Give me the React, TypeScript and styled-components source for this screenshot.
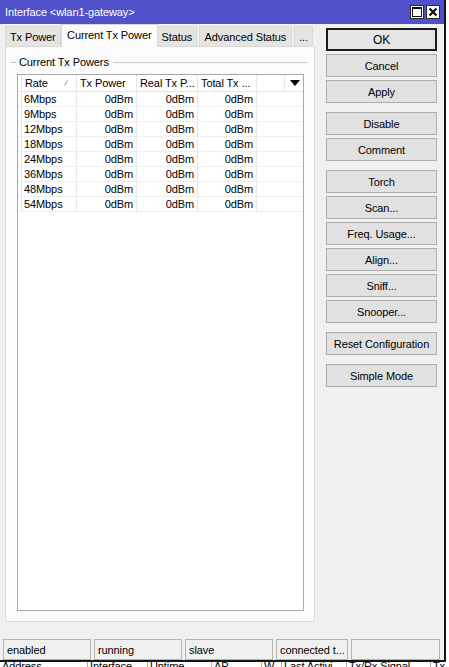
import React from 'react';
import styled, { createGlobalStyle, css } from 'styled-components';

const GlobalStyle = createGlobalStyle`
  html, body {
    margin: 0;
    padding: 0;
    background: #ffffff;
  }
  body {
    font-family: 'Liberation Sans', Arial, sans-serif;
    font-size: 11px;
    letter-spacing: -0.1px;
    color: #000;
  }
`;

const Page = styled.div`
  width: 449px;
  height: 667px;
  overflow: hidden;
  background: #ffffff;
`;

const Window = styled.div`
  width: 444px;
  height: 660px;
  display: flex;
  flex-direction: column;
  background: #f0f0f0;
  border-right: 2px solid #151515;
  border-bottom: 2px solid #151515;
`;

const TitleBar = styled.div`
  height: 24px;
  flex: none;
  display: flex;
  align-items: center;
  padding: 0 4px 0 5px;
  background: #5151cc;
  color: #ffffff;
`;

const Title = styled.span`
  flex: 1;
`;

const TitleButton = styled.div`
  width: 14px;
  height: 14px;
  margin-left: 2px;
  box-sizing: border-box;
  border: 1px solid #2a2a2a;
  background: #ffffff;
  display: flex;
  align-items: center;
  justify-content: center;
`;

const Main = styled.div`
  flex: 1;
  display: flex;
  gap: 11px;
  padding: 0 0 0 5px;
  min-height: 0;
`;

const LeftColumn = styled.div`
  width: 310px;
  display: flex;
  flex-direction: column;
`;

const TabStrip = styled.div`
  height: 22px;
  display: flex;
  align-items: flex-end;
  position: relative;
  z-index: 1;
`;

const Tab = styled.div<{ $w: number; $active?: boolean }>`
  width: ${({ $w }) => $w}px;
  box-sizing: border-box;
  height: 20px;
  margin-right: 2px;
  display: flex;
  align-items: center;
  justify-content: center;
  background: #e4e4e4;
  border: 1px solid #d9d9d9;
  border-bottom: none;
  white-space: nowrap;
  ${({ $active }) =>
    $active &&
    css`
      height: 23px;
      margin: 0 -1px -1px -2px;
      background: #fbfbfb;
      padding-bottom: 3px;
    `}
`;

const Panel = styled.div`
  flex: 1;
  display: flex;
  flex-direction: column;
  background: #fbfbfb;
  border: 1px solid #d9d9d9;
  padding: 8px 6px 10px 5px;
  min-height: 0;
`;

const GroupTitle = styled.div`
  display: flex;
  align-items: center;
  height: 14px;
  &::before {
    content: '';
    width: 6px;
    height: 1px;
    background: #c8c8c8;
    margin-right: 2px;
  }
  &::after {
    content: '';
    flex: 1;
    height: 1px;
    background: #c8c8c8;
    margin-left: 4px;
  }
`;

const GroupBody = styled.div`
  flex: 1;
  display: flex;
  padding: 5px 4px 0 6px;
  min-height: 0;
`;

const List = styled.div`
  flex: 1;
  background: #ffffff;
  border: 1px solid #a8a8a8;
  display: flex;
  flex-direction: column;
`;

const Row = styled.div<{ $header?: boolean }>`
  display: flex;
  height: ${({ $header }) => ($header ? 16 : 14)}px;
  border-bottom: 1px solid ${({ $header }) => ($header ? '#e5e5e5' : '#efefef')};
`;

const Cell = styled.div<{ $w?: number; $right?: boolean; $header?: boolean }>`
  ${({ $w }) =>
    $w !== undefined
      ? css`
          width: ${$w}px;
          flex: none;
          border-right: 1px solid #e8e8e8;
        `
      : css`
          flex: 1;
        `}
  display: flex;
  align-items: center;
  justify-content: ${({ $right }) => ($right ? 'flex-end' : 'flex-start')};
  padding: ${({ $right, $header }) => ($header ? '0 0 0 3px' : $right ? '0 3px 0 0' : '0 0 0 2px')};
  box-sizing: border-box;
  white-space: nowrap;
  overflow: hidden;
  position: relative;
`;

const SortMark = styled.svg`
  position: absolute;
  right: 8px;
  top: 5px;
`;

const DropArrow = styled.svg`
  margin-left: auto;
  margin-right: 3px;
`;

const RightColumn = styled.div`
  width: 111px;
  padding-top: 4px;
  display: flex;
  flex-direction: column;
  gap: 9px;
`;

const ButtonGroup = styled.div`
  display: flex;
  flex-direction: column;
  gap: 3px;
`;

const Button = styled.div<{ $default?: boolean }>`
  height: 23px;
  box-sizing: border-box;
  display: flex;
  align-items: center;
  justify-content: center;
  background: #e1e1e1;
  border: 1px solid #adadad;
  ${({ $default }) =>
    $default &&
    css`
      border: 2px solid #1a1a1a;
      background: #e5e5e5;
      font-size: 12px;
    `}
`;

const StatusBar = styled.div`
  height: 21px;
  flex: none;
  display: flex;
  gap: 3px;
  margin: 17px 4px 0 3px;
`;

const StatusCell = styled.div<{ $w?: number }>`
  ${({ $w }) => ($w ? `width: ${$w}px; flex: none;` : 'flex: 1;')}
  box-sizing: border-box;
  border: 1px solid #b4b4b4;
  display: flex;
  align-items: center;
  padding-left: 3px;
  white-space: nowrap;
`;

const BehindStrip = styled.div`
  height: 5px;
  overflow: hidden;
  display: flex;
  background: #ffffff;
`;

const BehindCol = styled.div<{ $w: number }>`
  width: ${({ $w }) => $w}px;
  flex: none;
  box-sizing: border-box;
  border-right: 1px solid #b0b0b0;
  padding-left: 2px;
  line-height: 10px;
  margin-top: -1px;
  white-space: nowrap;
  overflow: hidden;
`;

const columns = [
  { key: 'grip', label: '', w: 4 },
  { key: 'rate', label: 'Rate', w: 55 },
  { key: 'tx', label: 'Tx Power', w: 60 },
  { key: 'real', label: 'Real Tx P...', w: 61 },
  { key: 'total', label: 'Total Tx ...', w: 59 },
];

const rates = ['6Mbps', '9Mbps', '12Mbps', '18Mbps', '24Mbps', '36Mbps', '48Mbps', '54Mbps'];

const buttonGroups: string[][] = [
  ['OK', 'Cancel', 'Apply'],
  ['Disable', 'Comment'],
  ['Torch', 'Scan...', 'Freq. Usage...', 'Align...', 'Sniff...', 'Snooper...'],
  ['Reset Configuration'],
  ['Simple Mode'],
];

const tabs = [
  { label: 'Tx Power', w: 56 },
  { label: 'Current Tx Power', w: 98, active: true },
  { label: 'Status', w: 40 },
  { label: 'Advanced Status', w: 94 },
  { label: '...', w: 19 },
];

const status = [
  { text: 'enabled', w: 88 },
  { text: 'running', w: 88 },
  { text: 'slave', w: 88 },
  { text: 'connected t...', w: 72 },
  { text: '' },
];

const behind = [
  { text: 'Address', w: 88 },
  { text: 'Interface', w: 60 },
  { text: 'Uptime', w: 64 },
  { text: 'AP', w: 50 },
  { text: 'W', w: 20 },
  { text: 'Last Activi...', w: 65 },
  { text: 'Tx/Rx Signal', w: 84 },
  { text: 'Tx', w: 30 },
];

const App: React.FC = () => {
  return (
    <Page>
      <GlobalStyle />
      <Window>
        <TitleBar>
          <Title>Interface &lt;wlan1-gateway&gt;</Title>
          <TitleButton>
            <svg width="10" height="10" viewBox="0 0 10 10">
              <rect x="0.5" y="0.5" width="9" height="9" fill="none" stroke="#111" strokeWidth="1" />
              <rect x="0" y="0" width="10" height="2" fill="#111" />
            </svg>
          </TitleButton>
          <TitleButton>
            <svg width="10" height="10" viewBox="0 0 10 10">
              <path d="M1.5 1.5 L8.5 8.5 M8.5 1.5 L1.5 8.5" stroke="#111" strokeWidth="2.2" />
            </svg>
          </TitleButton>
        </TitleBar>

        <Main>
          <LeftColumn>
            <TabStrip>
              {tabs.map((t) => (
                <Tab key={t.label} $w={t.w} $active={t.active}>
                  {t.label}
                </Tab>
              ))}
            </TabStrip>
            <Panel>
              <GroupTitle>
                <span>Current Tx Powers</span>
              </GroupTitle>
              <GroupBody>
                <List>
                  <Row $header>
                    {columns.map((c) => (
                      <Cell key={c.key} $w={c.w} $header>
                        {c.label}
                        {c.key === 'rate' && (
                          <SortMark width="4" height="6" viewBox="0 0 4 6">
                            <path d="M0.5 5.5 L3.5 0.5" stroke="#9a9a9a" strokeWidth="1" />
                          </SortMark>
                        )}
                      </Cell>
                    ))}
                    <Cell $w={28} $header />
                    <Cell $header>
                      <DropArrow width="10" height="6" viewBox="0 0 10 6">
                        <path d="M0 0 H10 L5 6 Z" fill="#000" />
                      </DropArrow>
                    </Cell>
                  </Row>
                  {rates.map((r) => (
                    <Row key={r}>
                      <Cell $w={4} />
                      <Cell $w={55}>{r}</Cell>
                      <Cell $w={60} $right>0dBm</Cell>
                      <Cell $w={61} $right>0dBm</Cell>
                      <Cell $w={59} $right>0dBm</Cell>
                      <Cell />
                    </Row>
                  ))}
                </List>
              </GroupBody>
            </Panel>
          </LeftColumn>

          <RightColumn>
            {buttonGroups.map((group, i) => (
              <ButtonGroup key={i}>
                {group.map((label) => (
                  <Button key={label} $default={label === 'OK'}>
                    {label}
                  </Button>
                ))}
              </ButtonGroup>
            ))}
          </RightColumn>
        </Main>

        <StatusBar>
          {status.map((s, i) => (
            <StatusCell key={i} $w={s.w}>
              {s.text}
            </StatusCell>
          ))}
        </StatusBar>
      </Window>
      <BehindStrip>
        {behind.map((b) => (
          <BehindCol key={b.text} $w={b.w}>
            {b.text}
          </BehindCol>
        ))}
      </BehindStrip>
    </Page>
  );
};

export default App;
